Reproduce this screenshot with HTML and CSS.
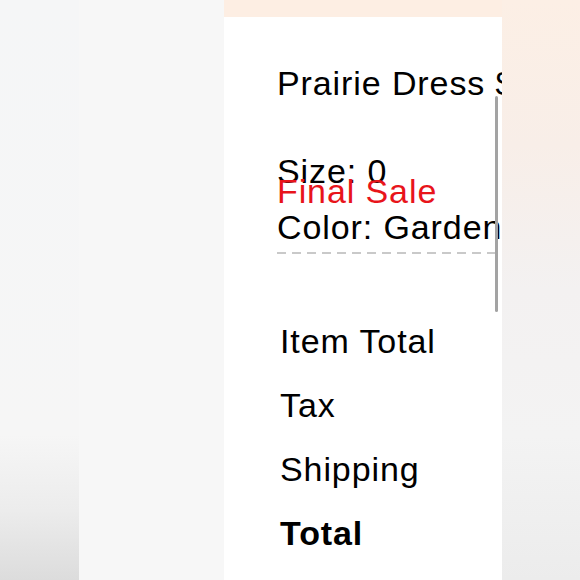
FILE: index.html
```html
<!DOCTYPE html>
<html>
<head>
<meta charset="utf-8">
<link rel="stylesheet" href="styles.css">
</head>
<body>
<div class="screen">
  <div class="side-left"></div>
  <div class="gutter"></div>
  <div class="panel">
    <div class="panel-top"></div>
    <div class="panel-body">
      <div class="item">
        <div class="line title">Prairie Dress $198.00</div>
        <div class="line size">Size: 0</div>
        <div class="line sale">Final Sale</div>
        <div class="line color">Color: Garden Floral</div>
        <div class="dash"></div>
      </div>
      <div class="summary">
        <div class="row">Item Total</div>
        <div class="row">Tax</div>
        <div class="row">Shipping</div>
        <div class="row total">Total</div>
      </div>
    </div>
    <div class="scrollbar"></div>
  </div>
  <div class="side-right"></div>
</div>
</body>
</html>
```
FILE: styles.css
```css
html, body {
  margin: 0;
  padding: 0;
}
body {
  width: 580px;
  height: 580px;
  overflow: hidden;
  font-family: "Liberation Sans", Arial, sans-serif;
  color: #000;
}
.screen {
  display: flex;
  width: 580px;
  height: 580px;
}
.side-left {
  width: 79px;
  flex: none;
  background: linear-gradient(to bottom, #f5f6f7 0%, #f6f6f6 75%, #ececec 88%, #dcdcdc 100%);
}
.gutter {
  width: 145px;
  flex: none;
  background: #f7f7f7;
}
.panel {
  position: relative;
  width: 278px;
  flex: none;
  background: #fff;
  overflow: hidden;
}
.panel-top {
  height: 17px;
  background: #fdeee3;
}
.panel-body {
  padding: 46px 0 0 53px;
}
.line {
  font-size: 34px;
  line-height: 40px;
  letter-spacing: 0.9px;
  white-space: nowrap;
}
.size {
  margin-top: 48px;
}
.sale {
  color: #e8141b;
  margin-top: -20px;
}
.color {
  margin-top: -4px;
}
.dash {
  margin-top: 5px;
  height: 2px;
  width: 222px;
  background: repeating-linear-gradient(to right, #c9c9c9 0 9px, transparent 9px 15px);
}
.summary {
  padding-left: 3px;
  margin-top: 67px;
  display: flex;
  flex-direction: column;
  gap: 24px;
}
.row {
  font-size: 34px;
  line-height: 40px;
  letter-spacing: 0.9px;
  white-space: nowrap;
}
.total {
  font-weight: bold;
}
.scrollbar {
  position: absolute;
  left: 271px;
  top: 96px;
  width: 3px;
  height: 216px;
  border-radius: 2px;
  background: #a3a3a3;
}
.side-right {
  flex: 1;
  background: linear-gradient(to bottom, #fcefe5 0%, #f8eee8 25%, #f3f1f1 50%, #f3f3f3 75%, #ececec 100%);
}
```
